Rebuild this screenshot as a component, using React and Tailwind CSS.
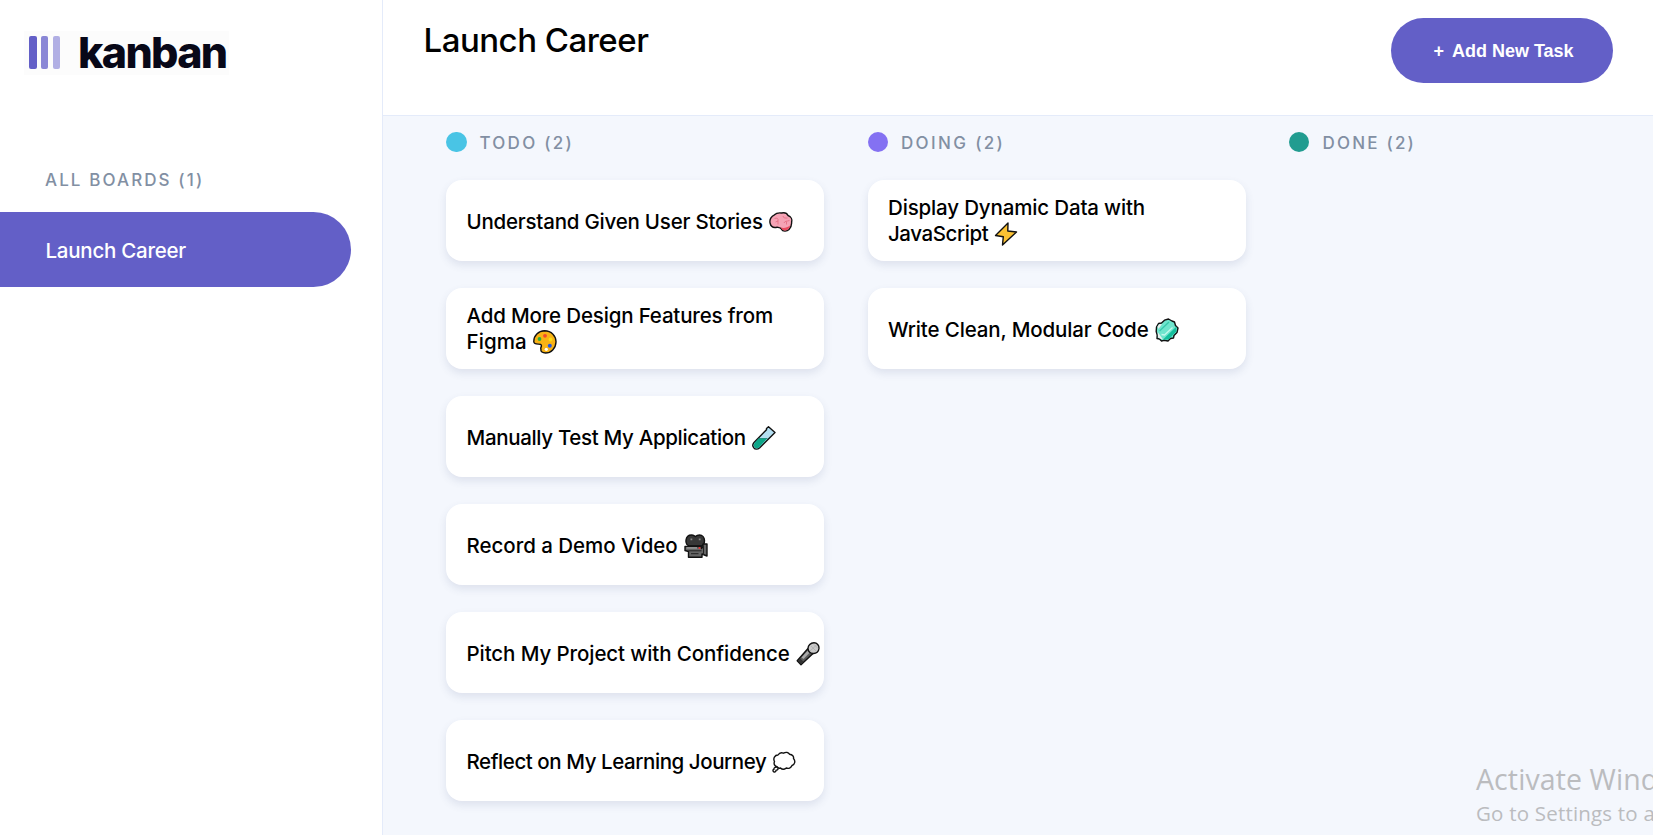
const ink = { stroke: "#111", strokeWidth: 1.4, strokeLinejoin: "round", strokeLinecap: "round" };

const EMOJI = {
  brain: (
    <>
      <path {...ink} fill="#f5a3b5" d="M1.200 13.500C0 9.500 2.500 6 5.500 4.800C8 2.200 11.500 3 12.600 3C15.500 2.400 18 3.200 19 5.500C22.200 6.500 23.300 9.500 22.600 12C23 15.500 21.200 18 20 19.500C17.800 21.800 13.500 21.500 12.500 19.200C11.500 17.500 9.500 17.600 8 17.200C5 17.800 2 17.200 1.200 13.500Z" />
      <path fill="#e84a5f" d="M11.500 17.300C14 18.400 18 18 21.300 15.500C20.500 19 18 20.600 15.800 20.500C13.500 20.500 12.800 19 11.500 17.300Z" />
      <path fill="none" stroke="#e2697f" strokeWidth=".8" d="M5.500 8.500C8 7.500 9.500 8.500 9 11V14.500M9 11L6.500 12M14 6C14.500 8.500 16.500 8 18.500 8M15 13C16 10.500 18 11.500 20.500 10.500M17.500 11.500V14.500" />
    </>
  ),
  palette: (
    <>
      <path {...ink} fill="#f9b314" d="M8 19.500C6.800 17.500 10 15.500 7.500 14.400C5.500 13.800 1 14.800 .8 11.800C.6 5.500 5.500 1 11.500 .8C18.500 .8 23.200 6 23 12C22.800 18.500 18 23 12.500 23C9.500 23 7.500 21.600 8 19.500Z" />
      <circle cx="6.500" cy="9" r="1.900" fill="#2eae3c" />
      <circle cx="12" cy="5.800" r="1.900" fill="#ee4b2f" />
      <circle cx="17.500" cy="9.500" r="1.900" fill="#fbdc12" />
      <circle cx="16.800" cy="15.700" r="2" fill="#2456e5" />
      <circle cx="13.300" cy="19.300" r="1.600" fill="#fff" />
    </>
  ),
  tube: (
    <>
      <path {...ink} fill="#b4dff2" d="M14.500 2.500L16.500 .7L23 6.500L21 8.500L7.500 22C5.500 23.600 3 23.400 1.800 21.800C.5 20.300 .7 18 2 16.500L14.500 3.800Z" />
      <path fill="#0ea688" d="M6.500 12.500H15.200L7 21.400C5.300 22.800 3.500 22.500 2.500 21.200C1.500 19.800 1.600 18.200 2.800 16.800Z" />
      <path fill="none" stroke="#087b67" strokeWidth=".7" d="M6.500 12.500H15.500" />
    </>
  ),
  camera: (
    <>
      <path {...ink} fill="#373737" d="M6 12C3 11.800 1.500 9 2 6C2.500 2.500 5 1 7.500 1C9.500 1 10.500 2 11.500 2.500C12.500 1.500 14 1 15.500 1C18.500 1 20.500 3.500 20.500 6.500C20.500 9.500 19 11.500 17.500 12Z" />
      <path {...ink} fill="#666" d="M1 12.500H17.500V14.500L19 12.500V10H23V22L18 20V23.200H4.500V17.500L1 16.500Z" />
      <path fill="#aaa" d="M2.500 13.300H13V14.500H2.500Z" />
      <path fill="none" stroke="#222" d="M4.500 16.800H17.500M7 19.700H14.500M19.500 12V21" />
      <path fill="#888" d="M6.500 4.500h1.800v1.800H6.500ZM14.800 4.500h1.800v1.800h-1.800Z" />
      <circle cx="15.500" cy="14" r="1.100" fill="#e33" />
    </>
  ),
  mic: (
    <>
      <path {...ink} fill="#5c5c5c" d="M1.200 18.800L12 6.500L17 11.500L5 22.800Z" />
      <path fill="#a9a9a9" d="M5.500 15.500L11.800 8.500L13.800 10.500L7.500 17Z" />
      <path fill="#333" d="M2 18.800L4.200 16.400L7.600 19.700L5 22Z" />
      <path {...ink} fill="#c9c9c9" d="M12 6.500C12 3.500 14.500 .8 18 .8C21 .8 23.300 3.300 23 6.300C22.800 9.500 20.300 11.800 17 11.500C14 11.200 12.200 9.300 12 6.500Z" />
      <path fill="none" stroke="#a5a5a5" strokeWidth=".6" d="M15 4L20.500 9.500M18 2.500L22 6.500M20.500 3L14 9" />
    </>
  ),
  thought: (
    <>
      <path {...ink} fill="#fff" d="M5.500 17C2.500 16.500 1.500 13.800 2.500 11.500C.8 8.500 2.800 5 6 5C7.500 2.600 10 2.600 11.500 3.200C14 1.800 16.500 2.500 17.500 4.200C20.500 4.500 22 6.500 21.500 8.500C23.800 11 22.800 14.500 20 15.500C19 18 16.500 19 14.300 18C12.500 19.500 10 19.500 8.500 18C7.200 18.400 6 18 5.500 17Z" />
      <path {...ink} fill="#fff" d="M2.500 17.800C3.500 16.800 5.500 17 6 18.200C6.500 19.500 5 20.200 4 20.200C4.200 21.500 3 22.400 1.800 21.800C.5 21 .8 19.500 2 19.300C1.800 18.700 2 18.200 2.500 17.800Z" />
    </>
  ),
  bolt: <path {...ink} fill="#fcc233" d="M14 1L1.500 13.500L9.300 14.700L8.500 23L22.500 10L13.800 9Z" />,
  soap: (
    <>
      <path {...ink} fill="#6fe5cd" d="M1.500 9L3.500 5.500L6.500 5L9.500 2.200L13.500 1L17 3L19.500 4L20.500 7.500L23 10L22 14.500L19 17.500L18.500 20L15.500 20.500L13 23L9 22.300L6.500 23L4.500 21L2 20.500L2.200 17L1.200 13.500Z" />
      <path fill="#14bf9d" d="M21.500 8.500L21.200 13.500L13.500 21.500L8 21.500Z" />
      <path stroke="#36c9ac" strokeWidth="1.300" d="M4.500 13L14 4" />
      <path stroke="#c4f8ed" strokeWidth="1.300" d="M6.500 16.500L9.500 17L17.500 9.500" fill="none" />
      <path fill="#e9efee" d="M2.700 14L8 21.500L5 20.500L3 19.500Z" />
      <path fill="#e9efee" d="M2.500 8.500L4.200 6.200L7 6L3.500 11Z" />
    </>
  ),
};

function Emoji({ name }) {
  return (
    <svg viewBox="0 0 24 24" className="ml-[6px] inline-block size-[24px] align-[-5px]">
      {EMOJI[name]}
    </svg>
  );
}

const COLUMNS = [
  {
    name: "TODO (2)",
    dot: "w-[21px] bg-[#49c4e5]",
    label: "ml-[12.5px] tracking-[2.25px]",
    tasks: [
      { lines: [["Understand Given User Stories", "tracking-[-0.22px]"]], emoji: "brain" },
      { lines: [["Add More Design Features from", "tracking-[-0.17px]"], ["Figma", "tracking-[0.1px]"]], emoji: "palette" },
      { lines: [["Manually Test My Application", "tracking-[-0.33px]"]], emoji: "tube" },
      { lines: [["Record a Demo Video", "tracking-[-0.03px]"]], emoji: "camera" },
      { lines: [["Pitch My Project with Confidence", "tracking-[-0.09px]"]], emoji: "mic" },
      { lines: [["Reflect on My Learning Journey", "tracking-[-0.43px]"]], emoji: "thought" },
    ],
  },
  {
    name: "DOING (2)",
    dot: "w-5 bg-[#8471f2]",
    label: "ml-[13.5px] tracking-[2.35px]",
    tasks: [
      { lines: [["Display Dynamic Data with", "tracking-[-0.15px]"], ["JavaScript", "tracking-[-0.43px]"]], emoji: "bolt" },
      { lines: [["Write Clean, Modular Code", "tracking-[-0.13px]"]], emoji: "soap" },
    ],
  },
  { name: "DONE (2)", dot: "w-5 bg-[#219c90]", label: "ml-[13.5px] tracking-[2.2px]", tasks: [] },
];

function Card({ task }) {
  const pad = task.lines.length > 1 ? "pt-[1px]" : "pt-[3px]";
  return (
    <div className={`flex h-[81px] flex-col justify-center whitespace-nowrap rounded-2xl bg-white pl-[20.5px] text-[20.5px] font-[550] leading-[26px] text-black shadow-[0_4px_8px_rgba(54,78,126,0.12)] ${pad}`}>
      {task.lines.map(([line, tracking], i) => (
        <div key={line} className={`h-[26px] ${tracking}`}>
          {line}
          {i === task.lines.length - 1 && <Emoji name={task.emoji} />}
        </div>
      ))}
    </div>
  );
}

function Sidebar() {
  return (
    <aside className="flex w-[383px] shrink-0 flex-col border-r border-[#e4ebfa] bg-white">
      <div className="ml-6 mt-[31px] flex h-[44px] w-[205px] bg-[#fcfcfc] pl-[5px] pt-[5px]">
        <div className="flex h-[33px] gap-[4px] pr-[18px]">
          <span className="w-2 rounded-[2px] bg-[#635fc7]" />
          <span className="w-[7px] rounded-[2px] bg-[#8a87d6]" />
          <span className="ml-[1px] w-[7px] rounded-[2px] bg-[#b1afe4]" />
        </div>
        <span className="text-[43px] font-extrabold leading-[32px] tracking-[-1.7px] text-[#080818]">kanban</span>
      </div>
      <h3 className="mt-[93px] pl-[45px] text-[17px] font-medium leading-[24px] tracking-[2.1px] text-[#828fa3]">ALL BOARDS (1)</h3>
      <div className="mt-[20px] flex h-[75px] w-[351px] items-center rounded-r-full bg-[#635fc7] pl-[45.5px] pt-[3px] text-[20.5px] font-[550] tracking-[-0.25px] text-white">
        Launch Career
      </div>
    </aside>
  );
}

export default function App() {
  return (
    <div className="relative flex h-[835px] w-[1653px] overflow-hidden bg-[#f4f7fd] font-['Inter',sans-serif]">
      <Sidebar />
      <main className="flex min-w-0 grow flex-col">
        <header className="flex h-[116px] shrink-0 items-start justify-between border-b border-[#e4ebfa] bg-white pl-[40.5px] pr-10 pt-[18px]">
          <h2 className="text-[33px] font-medium leading-[44px] tracking-[-0.5px] text-black">Launch Career</h2>
          <button className="flex h-[65px] w-[222px] items-center justify-center rounded-full bg-[#635fc7] pl-[3px] pt-[1px] font-['Liberation_Sans',Arial,sans-serif] text-[18px] font-bold text-white">
            <span className="mr-[8px]">+</span>
            <span>Add New Task</span>
          </button>
        </header>
        <div className="flex gap-[43.5px] pl-[63px] pt-[16px]">
          {COLUMNS.map((col) => (
            <section key={col.name} className="w-[378px] shrink-0">
              <div className="flex h-5 items-center">
                <span className={`h-5 rounded-full ${col.dot}`} />
                <h4 className={`pt-[2px] text-[17px] font-medium leading-5 text-[#828fa3] ${col.label}`}>{col.name}</h4>
              </div>
              <div className="mt-7 flex flex-col gap-[27px]">
                {col.tasks.map((t) => (
                  <Card key={t.emoji} task={t} />
                ))}
              </div>
            </section>
          ))}
        </div>
      </main>
      <div className="absolute left-[1476px] top-[760px] whitespace-nowrap font-['Open_Sans',sans-serif] text-[#bbbcbf]">
        <div className="text-[28.5px] leading-[38px] tracking-[0.1px]">Activate Windows</div>
        <div className="text-[20.5px] leading-[31px] tracking-[0.2px]">Go to Settings to activate Windows.</div>
      </div>
    </div>
  );
}
